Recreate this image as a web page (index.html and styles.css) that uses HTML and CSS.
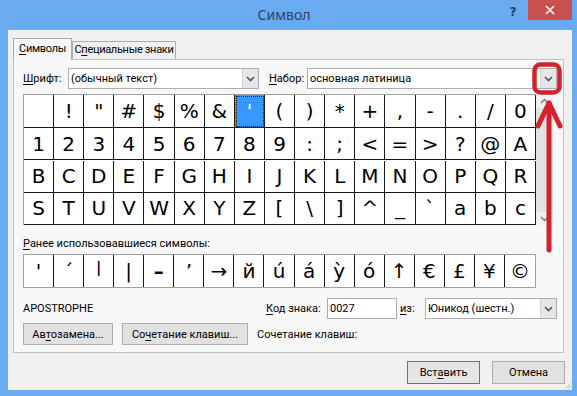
FILE: index.html
```html
<!DOCTYPE html>
<html lang="ru">
  <head>
    <meta charset="UTF-8" />
    <title>Символ</title>
    <link rel="stylesheet" href="styles.css">
  </head>
  <body>
    <div class="window">
      <div class="titlebar">
        <span class="title">Символ</span>
        <span class="help">?</span>
        <span class="close">
          <svg width="10" height="10" viewBox="0 0 10 10"><path d="M1 1L9 9M9 1L1 9" stroke="#fff" stroke-width="1.6"/></svg>
        </span>
      </div>

      <div class="client">
        <div class="tabs">
          <div class="tab active"><u>С</u>имволы</div>
          <div class="tab tab-special">С<u>п</u>ециальные знаки</div>
        </div>

        <div class="panel">
          <div class="row row-font">
            <label class="lbl-font"><u>Ш</u>рифт:</label>
            <div class="combo combo-font">
              <span class="combo-text">(обычный текст)</span>
              <span class="combo-btn"><svg width="9" height="6" viewBox="0 0 9 6"><path d="M1 1L4.5 4.5L8 1" fill="none" stroke="#555" stroke-width="1.6"/></svg></span>
            </div>
            <label class="lbl-set"><u>Н</u>абор:</label>
            <div class="combo combo-set">
              <span class="combo-text">основная латиница</span>
              <span class="combo-btn"><svg width="9" height="6" viewBox="0 0 9 6"><path d="M1 1L4.5 4.5L8 1" fill="none" stroke="#555" stroke-width="1.6"/></svg></span>
            </div>
          </div>

          <div class="charmap">
            <div class="grid">
              <div class="cell">&nbsp;</div><div class="cell">!</div><div class="cell">"</div><div class="cell">#</div><div class="cell">$</div><div class="cell">%</div><div class="cell">&amp;</div><div class="cell selected">'</div><div class="cell">(</div><div class="cell">)</div><div class="cell">*</div><div class="cell">+</div><div class="cell">,</div><div class="cell">-</div><div class="cell">.</div><div class="cell">/</div><div class="cell">0</div>
              <div class="cell">1</div><div class="cell">2</div><div class="cell">3</div><div class="cell">4</div><div class="cell">5</div><div class="cell">6</div><div class="cell">7</div><div class="cell">8</div><div class="cell">9</div><div class="cell">:</div><div class="cell">;</div><div class="cell">&lt;</div><div class="cell">=</div><div class="cell">&gt;</div><div class="cell">?</div><div class="cell">@</div><div class="cell">A</div>
              <div class="cell">B</div><div class="cell">C</div><div class="cell">D</div><div class="cell">E</div><div class="cell">F</div><div class="cell">G</div><div class="cell">H</div><div class="cell">I</div><div class="cell">J</div><div class="cell">K</div><div class="cell">L</div><div class="cell">M</div><div class="cell">N</div><div class="cell">O</div><div class="cell">P</div><div class="cell">Q</div><div class="cell">R</div>
              <div class="cell">S</div><div class="cell">T</div><div class="cell">U</div><div class="cell">V</div><div class="cell">W</div><div class="cell">X</div><div class="cell">Y</div><div class="cell">Z</div><div class="cell">[</div><div class="cell">\</div><div class="cell">]</div><div class="cell">^</div><div class="cell">_</div><div class="cell">`</div><div class="cell">a</div><div class="cell">b</div><div class="cell">c</div>
            </div>
            <div class="scrollbar">
              <svg width="9" height="6" viewBox="0 0 9 6"><path d="M1 5L4.5 1.5L8 5" fill="none" stroke="#777" stroke-width="1.4"/></svg>
              <div class="thumb"></div>
              <svg width="9" height="6" viewBox="0 0 9 6"><path d="M1 1L4.5 4.5L8 1" fill="none" stroke="#777" stroke-width="1.4"/></svg>
            </div>
          </div>

          <div class="recent-label"><u>Р</u>анее использовавшиеся символы:</div>
          <div class="recent">
            <div class="cell">'</div><div class="cell">´</div><div class="cell thin">ǀ</div><div class="cell">|</div><div class="cell dash">–</div><div class="cell">’</div><div class="cell">→</div><div class="cell">й</div><div class="cell">ú</div><div class="cell">á</div><div class="cell">ỳ</div><div class="cell">ó</div><div class="cell">↑</div><div class="cell">€</div><div class="cell">£</div><div class="cell">¥</div><div class="cell">©</div>
          </div>

          <div class="row row-code">
            <span class="char-name">APOSTROPHE</span>
            <label class="lbl-code"><u>К</u>од знака:</label>
            <div class="field">0027</div>
            <label class="lbl-from"><u>и</u>з:</label>
            <div class="combo combo-from">
              <span class="combo-text">Юникод (шестн.)</span>
              <span class="combo-btn"><svg width="9" height="6" viewBox="0 0 9 6"><path d="M1 1L4.5 4.5L8 1" fill="none" stroke="#555" stroke-width="1.6"/></svg></span>
            </div>
          </div>

          <div class="row row-buttons">
            <button class="btn btn-auto">Ав<u>т</u>озамена...</button>
            <button class="btn btn-keys">Со<u>ч</u>етание клавиш...</button>
            <span class="keys-text">Сочетание клавиш:</span>
          </div>
        </div>

        <div class="footer">
          <button class="btn btn-default">Вст<u>а</u>вить</button>
          <button class="btn">Отмена</button>
        </div>

        <svg class="grip" width="8" height="8" viewBox="0 0 8 8">
          <path d="M7 1L1 7M7 4L4 7" stroke="#b8b8b8" stroke-width="1"/>
        </svg>
      </div>

      <svg class="annotation" width="577" height="396" viewBox="0 0 577 396">
        <rect x="534.5" y="64.5" width="25" height="28" rx="6" fill="none" stroke="#d3222d" stroke-width="4.5"/>
        <path d="M549 103V250" stroke="#d3222d" stroke-width="5" stroke-linecap="round"/>
        <path d="M538 126L549 103L560 126" fill="none" stroke="#d3222d" stroke-width="5" stroke-linecap="round" stroke-linejoin="round"/>
      </svg>
    </div>
  </body>
</html>
```

FILE: styles.css
```css
* {
  box-sizing: border-box;
}

body {
  margin: 0;
  font-family: Roboto, "Noto Sans", sans-serif;
  font-size: 11px;
  color: #000;
}

u {
  text-decoration-thickness: 1px;
  text-underline-offset: 2px;
}

.window {
  width: 577px;
  height: 396px;
  background: #6aabf0;
  position: relative;
  overflow: hidden;
}

.titlebar {
  height: 30px;
  display: flex;
  align-items: flex-start;
  padding-left: 70px;
}

.title {
  flex: 1;
  text-align: center;
  font-family: "Noto Sans", sans-serif;
  font-size: 14px;
  line-height: 30px;
  color: #27446f;
}

.help {
  width: 30px;
  text-align: center;
  font-family: "DejaVu Sans", sans-serif;
  font-weight: bold;
  font-size: 12px;
  line-height: 24px;
  color: #1d3a63;
}

.close {
  width: 44px;
  height: 20px;
  margin-right: 5px;
  background: #c7514f;
  display: flex;
  align-items: center;
  justify-content: center;
}

.client {
  position: relative;
  height: 360px;
  margin: 0 5px 0 8px;
  padding: 7px 0 0 5px;
  background: #f0f0f0;
}

.tabs {
  display: flex;
  align-items: flex-end;
  height: 22px;
}

.tab {
  height: 18px;
  text-align: center;
  line-height: 16px;
  letter-spacing: -0.3px;
  border: 1px solid #acacac;
  border-bottom: none;
  background: #f0f0f0;
}

.tab.active {
  width: 59px;
  height: 22px;
  line-height: 20px;
  margin-bottom: -1px;
  background: #f7f7f7;
  position: relative;
  z-index: 1;
}

.tab-special {
  width: 104px;
}

.panel {
  width: 551px;
  height: 294px;
  border: 1px solid #c2c2c2;
  background: #f7f7f7;
  padding: 8px 0 0 9px;
}

.row {
  display: flex;
  align-items: center;
}

.row-font {
  height: 21px;
}

.lbl-font {
  width: 45px;
}

.combo {
  display: flex;
  height: 21px;
  border: 1px solid #abadb3;
  background: #fff;
}

.combo-text {
  flex: 1;
  padding-left: 2px;
  line-height: 19px;
}

.combo-btn {
  width: 16px;
  display: flex;
  align-items: center;
  justify-content: center;
  background: #e6e6e6;
  border-left: 1px solid #d4d4d4;
}

.combo-font {
  width: 191px;
}

.lbl-set {
  margin-left: 10px;
  width: 38px;
}

.combo-set {
  width: 250px;
}

.charmap {
  display: flex;
  margin-top: 5px;
}

.grid {
  width: 513px;
  display: grid;
  grid-template-columns: repeat(17, 1fr);
  border-top: 1px solid #a0a0a0;
  border-left: 1px solid #a0a0a0;
  background: #fff;
}

.cell {
  height: 32px;
  border-right: 1px solid #1a1a1a;
  border-bottom: 1px solid #1a1a1a;
  display: flex;
  align-items: center;
  justify-content: center;
  font-family: "DejaVu Sans", sans-serif;
  font-size: 20px;
}

.grid .cell:nth-child(-n+17) {
  height: 33px;
}

.cell.selected {
  background: #3399ff;
  color: #fff;
  outline: 1px dotted #1a1a1a;
  outline-offset: -2px;
}

.scrollbar {
  width: 17px;
  height: 131px;
  display: flex;
  flex-direction: column;
  align-items: center;
  background: #f0f0f0;
  padding: 4px 0 3px;
}

.thumb {
  flex: 1;
  width: 100%;
  margin: 4px 0;
  background: #e2e2e2;
}

.recent-label {
  margin-top: 12px;
  height: 17px;
}

.recent {
  width: 513px;
  display: grid;
  grid-template-columns: repeat(17, 1fr);
  border: 1px solid #a0a0a0;
  background: #fff;
}

.recent .cell {
  height: 32px;
  border-bottom: none;
}

.recent .cell:last-child {
  border-right: none;
}

.recent .cell.thin {
  font-size: 15px;
  padding-bottom: 6px;
}

.recent .cell.dash {
  font-weight: bold;
}

.row-code {
  margin-top: 10px;
  height: 21px;
}

.char-name {
  width: 243px;
}

.lbl-code {
  width: 61px;
}

.field {
  width: 70px;
  height: 21px;
  border: 1px solid #abadb3;
  background: #fff;
  padding-left: 2px;
  line-height: 19px;
}

.lbl-from {
  margin-left: 3px;
  width: 25px;
}

.combo-from {
  width: 132px;
}

.row-buttons {
  margin-top: 4px;
}

.btn {
  height: 22px;
  padding: 0 6px;
  border: 1px solid #adadad;
  background: #e1e1e1;
  font-family: Roboto, "Noto Sans", sans-serif;
  font-size: 11px;
  color: #000;
}

.btn-auto {
  width: 90px;
}

.btn-keys {
  width: 126px;
  margin-left: 9px;
}

.keys-text {
  margin-left: 9px;
}

.footer {
  display: flex;
  justify-content: flex-end;
  gap: 12px;
  margin-top: 8px;
  padding-right: 7px;
}

.footer .btn {
  width: 73px;
  height: 23px;
}

.btn-default {
  border-color: #3c7fb1;
  background: #e5e5e5;
}

.grip {
  position: absolute;
  right: 0;
  bottom: 0;
}

.annotation {
  position: absolute;
  left: 0;
  top: 0;
  pointer-events: none;
}
```
